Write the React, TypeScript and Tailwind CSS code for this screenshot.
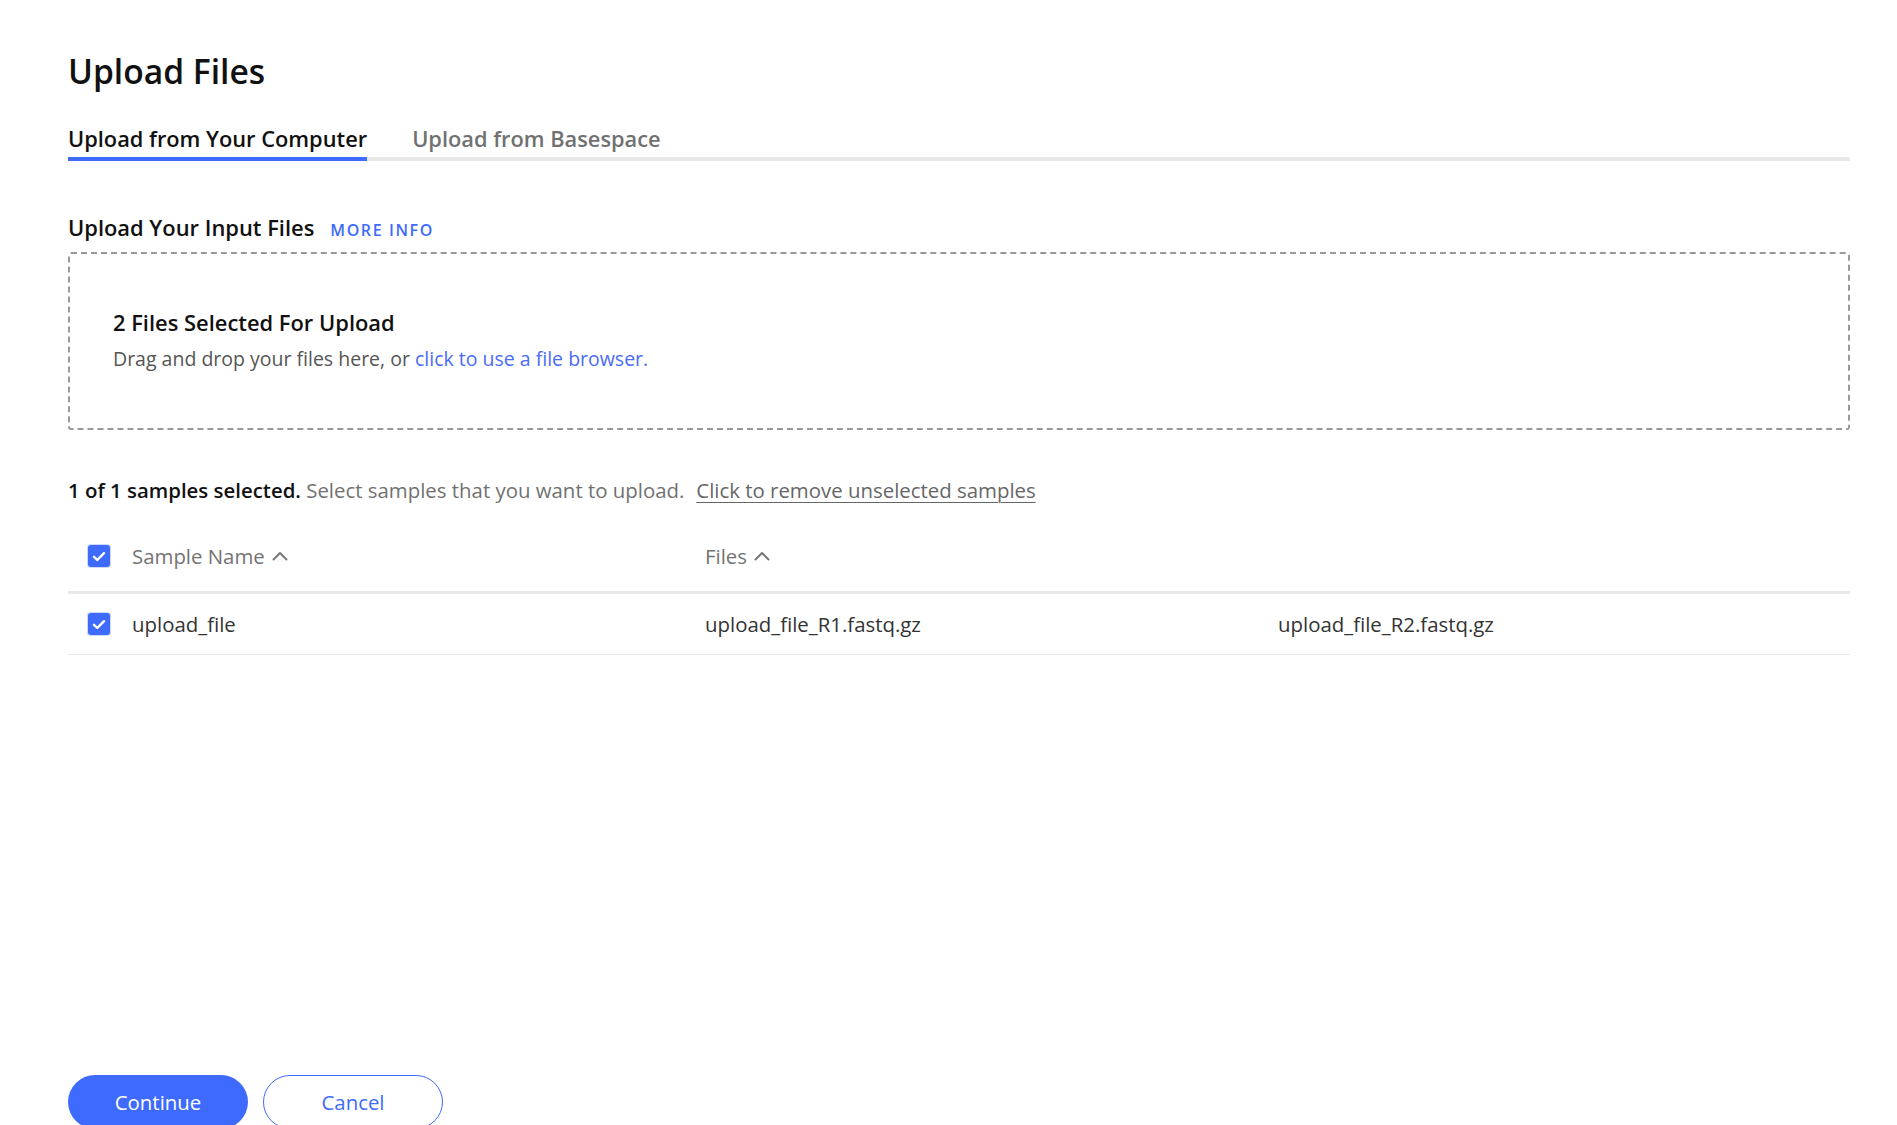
import React from "react";

function Check() {
  return (
    <span className="flex h-[22px] w-[22px] items-center justify-center rounded-[3px] bg-[#3e6bfd] shadow-[0_0_0_1px_#cfd8f5]">
      <svg width="14" height="11" viewBox="0 0 14 11" fill="none">
        <path d="M2 5.8L5.3 9L12 2.2" stroke="white" strokeWidth="2.4" strokeLinecap="round" strokeLinejoin="round" />
      </svg>
    </span>
  );
}

function Chevron() {
  return (
    <svg width="16" height="10" viewBox="0 0 16 10" fill="none" className="ml-[7px]">
      <path d="M1.5 8.5L8 2L14.5 8.5" stroke="#777" strokeWidth="2" strokeLinecap="round" strokeLinejoin="round" />
    </svg>
  );
}

export default function App() {
  return (
    <div className="min-h-screen bg-white pl-[68px] pr-[47px] font-['Open_Sans',sans-serif] text-[#1a1a1a]">
      <h1 className="pt-[51px] text-[33.6px] font-semibold leading-[40px] text-[#111]">Upload Files</h1>

      <div className="mt-[34px] flex border-b-4 border-[#e8e8e8]">
        <div className="-mb-[4px] border-b-4 border-[#3e6bfd] pb-[4px] text-[21.8px] font-semibold leading-[28px] text-[#111]">
          Upload from Your Computer
        </div>
        <div className="ml-[45px] pb-[4px] text-[21.8px] font-semibold leading-[28px] text-[#717171]">
          Upload from Basespace
        </div>
      </div>

      <div className="mt-[53px] flex items-baseline gap-[16px]">
        <span className="text-[21.9px] font-semibold leading-[28px] text-[#111]">Upload Your Input Files</span>
        <span className="text-[16px] font-semibold tracking-[0.1em] text-[#3e6bfd]">MORE INFO</span>
      </div>

      <div className="mt-[10px] flex h-[178px] flex-col justify-center rounded-[3px] border-2 border-dashed border-[#999] pl-[43px]">
        <div className="text-[21.9px] font-semibold leading-[28px] text-[#111]">2 Files Selected For Upload</div>
        <div className="mt-[8px] text-[19.5px] leading-[28px] text-[#555]">
          Drag and drop your files here, or{" "}
          <span className="text-[#4a6cf7]">click to use a file browser.</span>
        </div>
      </div>

      <div className="mt-[46px] text-[20.4px] leading-[28px]">
        <span className="font-semibold text-[#111]">1 of 1 samples selected.</span>{" "}
        <span className="text-[#717171]">Select samples that you want to upload.</span>
        <span className="ml-[12px] text-[#666] underline decoration-1 underline-offset-[4px]">Click to remove unselected samples</span>
      </div>

      <div className="mt-[17px]">
        <div className="grid h-[73px] grid-cols-[64px_573px_573px_1fr] items-center border-b-[3px] border-[#e8e8e8] text-[20.4px] text-[#737373]">
          <div className="pl-[20px]">
            <Check />
          </div>
          <div className="flex items-center">
            Sample Name
            <Chevron />
          </div>
          <div className="flex items-center">
            Files
            <Chevron />
          </div>
          <div />
        </div>
        <div className="grid h-[61px] grid-cols-[64px_573px_573px_1fr] items-center border-b border-[#e8e8e8] text-[20.4px] text-[#333]">
          <div className="pl-[20px]">
            <Check />
          </div>
          <div>upload_file</div>
          <div>upload_file_R1.fastq.gz</div>
          <div>upload_file_R2.fastq.gz</div>
        </div>
      </div>

      <div className="mt-[420px] flex gap-[15px]">
        <button className="h-[54px] w-[180px] rounded-full bg-[#3e6bfd] text-[20.4px] text-white">Continue</button>
        <button className="h-[54px] w-[180px] rounded-full border border-[#3e6bfd] bg-white text-[20.4px] text-[#3e6bfd]">Cancel</button>
      </div>
    </div>
  );
}
